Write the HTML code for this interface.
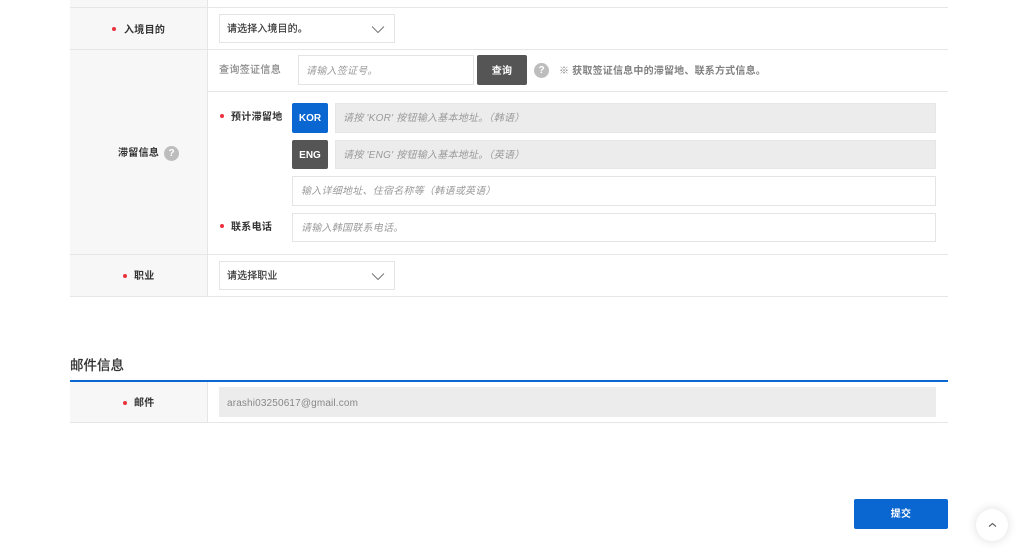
<!DOCTYPE html>
<html lang="zh"><head><meta charset="utf-8"><style>
html,body{margin:0;padding:0;background:#fff}
#p{position:relative;width:1024px;height:560px;overflow:hidden;background:#fff;font-family:"Liberation Sans","Noto Sans CJK SC",sans-serif;font-size:10px;color:#333;filter:blur(.3px)}
#p div{position:absolute;box-sizing:border-box;white-space:nowrap}
.l{background:#e6e6e6;height:1px}
.bg{background:#f7f7f7;left:70px;width:137px}
.t{line-height:14px;height:14px;margin-top:2px;letter-spacing:.1px;-webkit-text-stroke:.15px currentColor}
.b{font-weight:700;color:#333;letter-spacing:.3px;-webkit-text-stroke:0}
.r{width:4px;height:4px;border-radius:50%;background:#e8323c}
.box{border:1px solid #e4e4e4;background:#fff}
.ph{font-style:italic;color:#9a9a9a;letter-spacing:.25px;-webkit-text-stroke:0}
.dis{background:#ececec;border:1px solid #e6e6e6}
.btn{border-radius:2px;color:#fff;font-weight:700;text-align:center}
.q{width:15px;height:15px;border-radius:50%;background:#bdbdbd;color:#fff;font-weight:700;font-size:10px;line-height:15px;text-align:center}
</style></head><body><div id="p">
<div class="bg" style="top:0;height:296px"></div>
<div class="bg" style="top:381px;height:41px"></div>
<div style="left:207px;top:0;width:1px;height:296px;background:#e6e6e6"></div>
<div style="left:207px;top:381px;width:1px;height:41px;background:#e6e6e6"></div>
<div class="l" style="left:70px;top:7px;width:878px"></div>
<div class="l" style="left:70px;top:49px;width:878px"></div>
<div class="l" style="left:208px;top:91px;width:740px"></div>
<div class="l" style="left:70px;top:254px;width:878px"></div>
<div class="l" style="left:70px;top:296px;width:878px"></div>
<div style="left:70px;top:380px;width:878px;height:2px;background:#0a66d0"></div>
<div class="l" style="left:70px;top:422px;width:878px"></div>

<div class="r" style="left:112px;top:27px"></div>
<div class="t b" style="left:124px;top:22px">入境目的</div>
<div class="box" style="left:219px;top:14px;width:176px;height:29px"></div>
<div class="t" style="left:227px;top:21px">请选择入境目的。</div>
<svg style="position:absolute;left:371px;top:25px" width="14" height="9"><path d="M1 1.5L7 7.5L13 1.5" fill="none" stroke="#777" stroke-width="1"/></svg>

<div class="t" style="left:219px;top:62px;color:#888;letter-spacing:.35px">查询签证信息</div>
<div class="box" style="left:298px;top:55px;width:176px;height:30px"></div>
<div class="t ph" style="left:306px;top:63px">请输入签证号。</div>
<div class="btn" style="left:477px;top:55px;width:50px;height:30px;background:#555;line-height:31px;padding-top:1px;letter-spacing:.3px">查询</div>
<div class="q" style="left:534px;top:63px">?</div>
<div class="t" style="left:559px;top:63px;color:#808080;font-weight:700;letter-spacing:.2px;-webkit-text-stroke:0">※ 获取签证信息中的滞留地、联系方式信息。</div>

<div class="t b" style="left:118px;top:145px">滞留信息</div>
<div class="q" style="left:164px;top:146px">?</div>

<div class="r" style="left:220px;top:114px"></div>
<div class="t b" style="left:231px;top:109px">预计滞留地</div>
<div class="btn" style="left:292px;top:103px;width:36px;height:30px;background:#0a66d0;line-height:30px;padding-top:1px">KOR</div>
<div class="dis" style="left:335px;top:103px;width:601px;height:30px"></div>
<div class="t ph" style="left:343px;top:110px">请按 'KOR' 按钮输入基本地址。（韩语）</div>
<div class="btn" style="left:292px;top:140px;width:36px;height:29px;background:#555;line-height:29px;padding-top:1px">ENG</div>
<div class="dis" style="left:335px;top:140px;width:601px;height:29px"></div>
<div class="t ph" style="left:343px;top:147px">请按 'ENG' 按钮输入基本地址。（英语）</div>
<div class="box" style="left:292px;top:176px;width:644px;height:30px"></div>
<div class="t ph" style="left:301px;top:183px">输入详细地址、住宿名称等（韩语或英语）</div>
<div class="r" style="left:220px;top:224px"></div>
<div class="t b" style="left:231px;top:219px">联系电话</div>
<div class="box" style="left:292px;top:213px;width:644px;height:29px"></div>
<div class="t ph" style="left:301px;top:220px">请输入韩国联系电话。</div>

<div class="r" style="left:123px;top:274px"></div>
<div class="t b" style="left:134px;top:268px">职业</div>
<div class="box" style="left:219px;top:261px;width:176px;height:29px"></div>
<div class="t" style="left:227px;top:268px">请选择职业</div>
<svg style="position:absolute;left:371px;top:272px" width="14" height="9"><path d="M1 1.5L7 7.5L13 1.5" fill="none" stroke="#777" stroke-width="1"/></svg>

<div style="left:70px;top:357px;font-size:13.5px;line-height:18px;color:#333;-webkit-text-stroke:.35px #333">邮件信息</div>
<div class="r" style="left:123px;top:401px"></div>
<div class="t b" style="left:134px;top:395px">邮件</div>
<div style="left:219px;top:387px;width:717px;height:30px;background:#ececec"></div>
<div class="t" style="left:227px;top:395px;color:#888;font-size:10px;letter-spacing:.15px;-webkit-text-stroke:0">arashi03250617@gmail.com</div>

<div class="btn" style="left:854px;top:499px;width:94px;height:30px;background:#0a66d0;line-height:30px;padding-top:1px;letter-spacing:.3px">提交</div>
<div style="left:976px;top:509px;width:32px;height:32px;border-radius:50%;background:#fff;box-shadow:0 0 10px rgba(0,0,0,.14)"></div>
<svg style="position:absolute;left:988px;top:522px" width="9" height="6"><path d="M1 4.5L4.5 1.5L8 4.5" fill="none" stroke="#666" stroke-width="1.2"/></svg>
</div></body></html>
